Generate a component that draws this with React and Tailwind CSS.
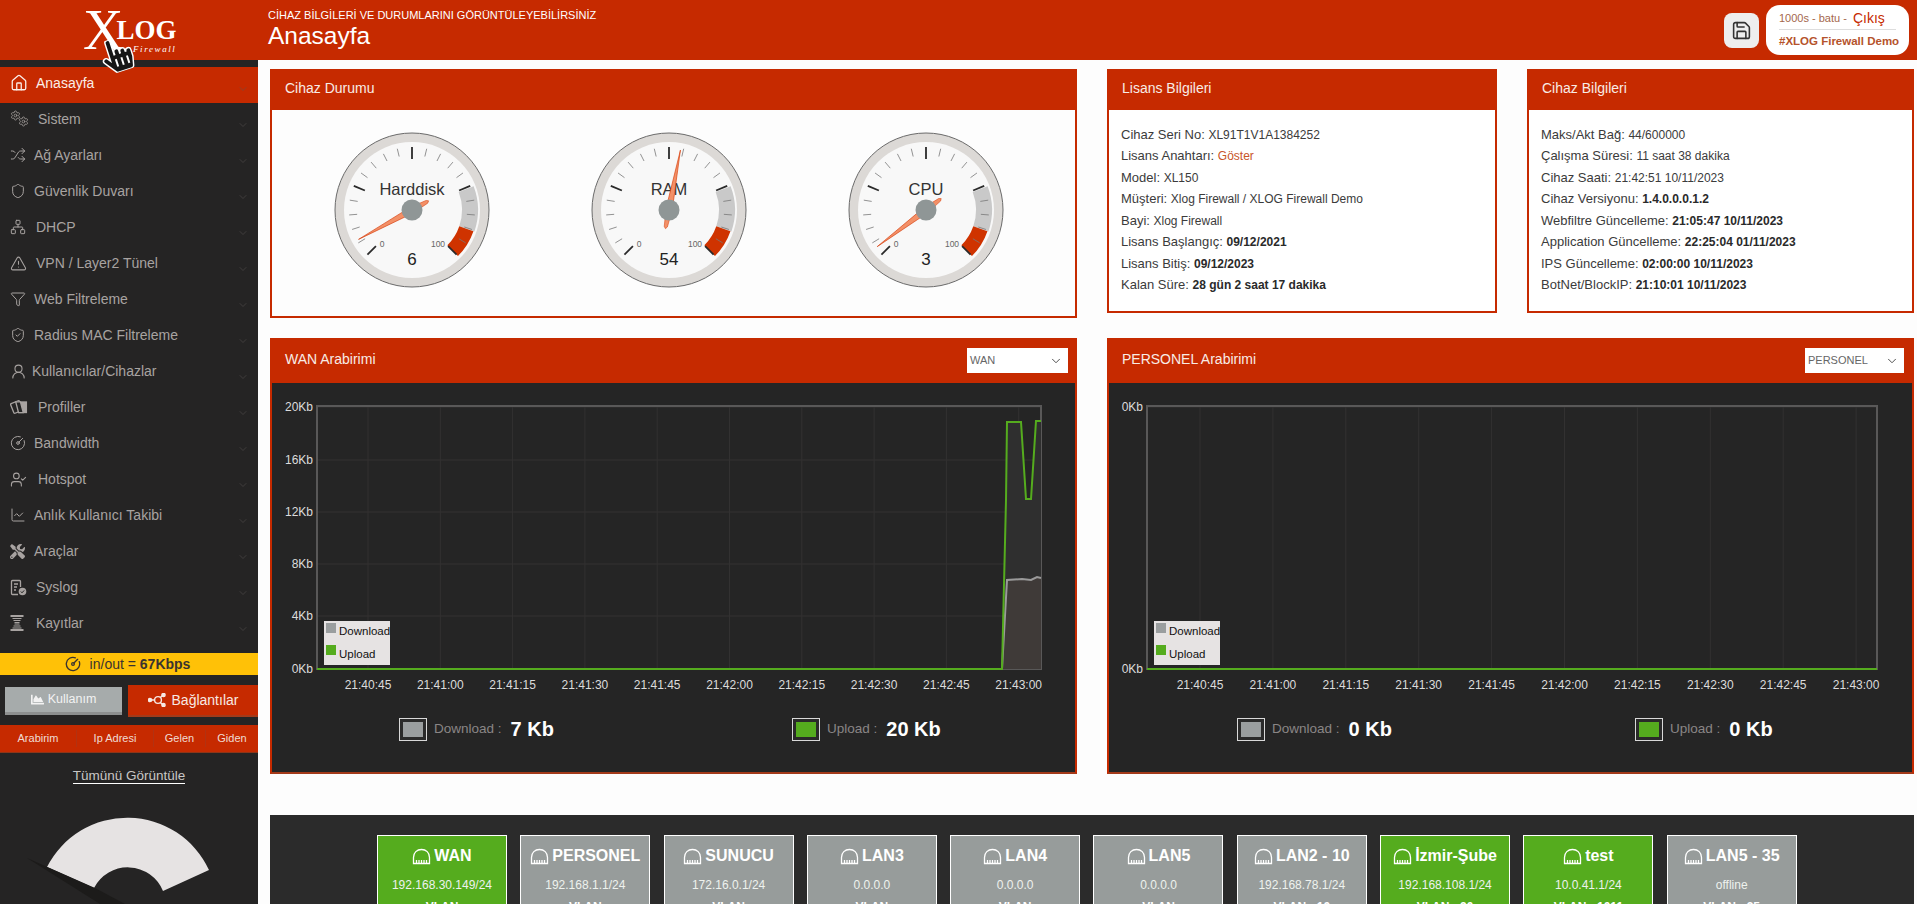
import React from "react";
import {
  House, Settings, Shuffle, Shield, Network, TriangleAlert, Funnel, ShieldCheck, UserRound,
  CircleGauge, UserCheck, ChartLine, ChevronDown, Save,
} from "lucide-react";
import { FaHandPointer, FaTools, FaChartArea } from "react-icons/fa";

function Gears() {
  return (
    <span className="relative block h-[18px] w-[18px]">
      <Settings size={11} strokeWidth={1.6} className="absolute left-0 top-0" />
      <Settings size={11} strokeWidth={1.6} className="absolute left-[8px] top-[6px]" />
    </span>
  );
}

function Cards() {
  return (
    <svg width="19" height="16" viewBox="0 0 19 16" fill="none" stroke="currentColor" strokeWidth="1.4">
      <rect x="2" y="2.5" width="10" height="11" rx="1" transform="rotate(-22 7 8)" />
      <path d="M9 2h9v12.5H9z" fill="currentColor" stroke="none" />
      <path d="M6 2.5l5 0 3 11.5H9z" fill="#242424" stroke="currentColor" />
    </svg>
  );
}

function LogDoc() {
  return (
    <svg width="17" height="17" viewBox="0 0 17 17" fill="none" stroke="currentColor" strokeWidth="1.3">
      <path d="M8 15.5H2.5A1 1 0 0 1 1.5 14.5V2.5A1 1 0 0 1 2.5 1.5H9.5A1 1 0 0 1 10.5 2.5V8" />
      <path d="M4 5H8M4 8H7M4 11H6" />
      <circle cx="12.5" cy="12.5" r="3.8" fill="currentColor" stroke="none" />
      <path d="M10.8 12.5L12 13.8L14.2 11.4" stroke="#242424" strokeWidth="1" />
    </svg>
  );
}

function Stack() {
  return (
    <svg width="14" height="16" viewBox="0 0 14 16" fill="none" stroke="currentColor" strokeWidth="1.2">
      <path d="M0.5 1H13.5M0.5 15H13.5" strokeWidth="1.8" />
      <path d="M2.5 3.5H11.5M3.5 5.5H10.5M4.5 7.5H9.5M4.5 9H9.5M3.5 11H10.5M2.5 13H11.5" />
    </svg>
  );
}

const menu = [
  { label: "Anasayfa", icon: <House size={18} strokeWidth={1.7} />, cls: "ml-[8px]", active: true },
  { label: "Sistem", icon: <Gears />, cls: "ml-[10px]" },
  { label: "Ağ Ayarları", icon: <Shuffle size={16} strokeWidth={1.5} />, cls: "ml-[6px]" },
  { label: "Güvenlik Duvarı", icon: <Shield size={16} strokeWidth={1.5} />, cls: "ml-[6px]" },
  { label: "DHCP", icon: <Network size={16} strokeWidth={1.5} />, cls: "ml-[8px]" },
  { label: "VPN / Layer2 Tünel", icon: <TriangleAlert size={17} strokeWidth={1.5} />, cls: "ml-[8px]" },
  { label: "Web Filtreleme", icon: <Funnel size={16} strokeWidth={1.5} />, cls: "ml-[6px]" },
  { label: "Radius MAC Filtreleme", icon: <ShieldCheck size={16} strokeWidth={1.5} />, cls: "ml-[6px]" },
  { label: "Kullanıcılar/Cihazlar", icon: <UserRound size={17} strokeWidth={1.5} />, cls: "ml-[4px]" },
  { label: "Profiller", icon: <Cards />, cls: "ml-[10px]" },
  { label: "Bandwidth", icon: <CircleGauge size={16} strokeWidth={1.5} />, cls: "ml-[6px]" },
  { label: "Hotspot", icon: <UserCheck size={17} strokeWidth={1.5} />, cls: "ml-[10px]" },
  { label: "Anlık Kullanıcı Takibi", icon: <ChartLine size={16} strokeWidth={1.5} />, cls: "ml-[6px]" },
  { label: "Araçlar", icon: <FaTools size={15} />, cls: "ml-[6px]" },
  { label: "Syslog", icon: <LogDoc />, cls: "ml-[8px]" },
  { label: "Kayıtlar", icon: <Stack />, cls: "ml-[8px]" },
];

function Sidebar() {
  return (
    <aside className="flex h-full w-[258px] shrink-0 flex-col overflow-hidden bg-[#252424] pt-[7px]">
      {menu.map((m) => (
        <div
          key={m.label}
          className={
            m.active
              ? "flex h-[36px] items-center bg-[#c62a00] pl-[10px] pr-[9px] text-[14px] text-[#fbeee8]"
              : "flex h-[36px] items-center pl-[10px] pr-[9px] text-[14px] text-[#a8a3a1]"
          }
        >
          <span className="flex h-[18px] w-[18px] shrink-0 items-center justify-start pb-[4px]">{m.icon}</span>
          <span className={"pb-[4px] " + m.cls}>{m.label}</span>
          <ChevronDown size={12} strokeWidth={1} className="ml-auto mt-[8px] text-[#5a5655]" />
        </div>
      ))}
      <div className="mt-[10px] flex h-[22px] items-center justify-center gap-[9px] bg-[#ffc107] pr-[3px] text-[14px] text-[#3a3330]">
        <CircleGauge size={16} strokeWidth={2} />
        <span>
          in/out = <b>67Kbps</b>
        </span>
      </div>
      <div className="mt-[10px] flex h-[32px] items-center pl-[5px]">
        <div className="flex h-[28px] w-[117px] items-center justify-center gap-[4px] border-b-[3px] border-[#8d8f8f] bg-[#a6abab] text-[12.5px] text-[#f2f2f2]">
          <FaChartArea size={13} />
          Kullanım
        </div>
        <div className="ml-[6px] flex h-[32px] w-[130px] items-center justify-center gap-[6px] border-b-[2px] border-[#a33a1a] bg-[#c62a00] text-[14px] text-[#f7e9e3]">
          <svg width="18" height="14" viewBox="0 0 18 14" fill="none" stroke="currentColor" strokeWidth="1.4">
            <circle cx="10" cy="7" r="3.4" />
            <path d="M1 7h5.5M12.4 4.5L15.5 1.5M12.4 9.5L15.5 12.5" />
            <circle cx="2" cy="7" r="1.6" fill="currentColor" />
            <circle cx="15.5" cy="2" r="1.6" fill="currentColor" />
            <circle cx="15.5" cy="12" r="1.6" fill="currentColor" />
          </svg>
          Bağlantılar
        </div>
      </div>
      <div className="mt-[8px] flex h-[28px] items-center border-b-[1px] border-[#8d3518] bg-[#c62a00] text-[11px] text-[#f0dcd4]">
        <div className="w-[76px] text-center">Arabirim</div>
        <div className="w-[77px] border-l border-[#b23212] text-center">Ip Adresi</div>
        <div className="w-[52px] border-l border-[#b23212] text-center">Gelen</div>
        <div className="w-[53px] border-l border-[#b23212] text-center">Giden</div>
      </div>
      <div className="mt-[14px] text-center text-[13.5px] leading-[18px] text-[#c9c7c6]">
        <span className="border-b border-white">Tümünü Görüntüle</span>
      </div>
      <svg className="mt-[15px] block shrink-0" width="258" height="104" viewBox="0 800 258 104">
        <path d="M47 867A90 90 0 0 1 209 870L163 891A38 38 0 0 0 94 888Z" fill="#e6e3e3" />
        <path d="M27 858L95 888L125 904H100Z" fill="#1c1b1a" />
      </svg>
    </aside>
  );
}

function polar(r, a) {
  const t = (a * Math.PI) / 180;
  return [r * Math.sin(t), -r * Math.cos(t)];
}

function arc(r1, r2, a1, a2) {
  const [x1, y1] = polar(r2, a1);
  const [x2, y2] = polar(r2, a2);
  const [x3, y3] = polar(r1, a2);
  const [x4, y4] = polar(r1, a1);
  return `M${x1} ${y1}A${r2} ${r2} 0 0 1 ${x2} ${y2}L${x3} ${y3}A${r1} ${r1} 0 0 0 ${x4} ${y4}Z`;
}

function Gauge({ label, value }) {
  const ticks = [];
  for (let i = 0; i <= 20; i++) {
    const a = -135 + i * 13.5;
    const major = i % 5 === 0;
    const [x1, y1] = polar(major ? 51 : 55, a);
    const [x2, y2] = polar(63, a);
    ticks.push(
      <line
        key={i}
        x1={x1}
        y1={y1}
        x2={x2}
        y2={y2}
        stroke={major ? "#2a2a2a" : "#777"}
        strokeWidth={major ? 1.8 : 0.8}
      />
    );
  }
  const angle = -135 + value * 2.7;
  return (
    <svg width="160" height="160" viewBox="-80 -80 160 160" className="shrink-0">
      <circle r="77" fill="#dcd9d6" stroke="#6b6b6b" strokeWidth="1" />
      <circle r="68" fill="#f8f8f8" />
      <path d={arc(50, 66, 69, 109)} fill="#c9c9c9" />
      <path d={arc(50, 65, 109, 135)} fill="#cf3300" />
      {ticks}
      <text y="-15" textAnchor="middle" fontSize="16.5" fill="#333" fontFamily="'Liberation Sans',sans-serif">
        {label}
      </text>
      <text y="55" textAnchor="middle" fontSize="17" fill="#222" fontFamily="'Liberation Sans',sans-serif">
        {value}
      </text>
      <text x="-30" y="37" textAnchor="middle" fontSize="8.5" fill="#666" fontFamily="'Liberation Sans',sans-serif">
        0
      </text>
      <text x="26" y="37" textAnchor="middle" fontSize="8.5" fill="#666" fontFamily="'Liberation Sans',sans-serif">
        100
      </text>
      <g transform={`rotate(${angle})`}>
        <path d="M0 -61L2.8 -8L-2.8 -8Z" fill="#f39067" stroke="#d63c0a" strokeWidth="0.6" />
        <path d="M-2.4 8L2.4 8L1.6 17L0 19L-1.6 17Z" fill="#f39067" stroke="#d63c0a" strokeWidth="0.5" />
      </g>
      <circle r="10.5" fill="#8f9696" />
    </svg>
  );
}

function Panel({ title, className, bodyClass, children }) {
  return (
    <section className={"flex flex-col border-2 border-[#c62a00] " + className}>
      <div className="flex h-[39px] shrink-0 items-center bg-[#c62a00] pb-[4px] pl-[13px] text-[14px] text-[#f8ece6]">
        {title}
      </div>
      <div className={"flex-1 " + bodyClass}>{children}</div>
    </section>
  );
}

function Row({ children }) {
  return <div className="h-[21.5px] text-[13px] leading-[21.5px] text-[#3b3b3b]">{children}</div>;
}

function V({ children }) {
  return <span className="text-[12px]">{children}</span>;
}

function B({ children }) {
  return <b className="text-[12px] text-[#2a2a2a]">{children}</b>;
}

const times = [
  "21:40:45", "21:41:00", "21:41:15", "21:41:30", "21:41:45",
  "21:42:00", "21:42:15", "21:42:30", "21:42:45", "21:43:00",
];

function Chart({ box, left, right, timeStart, timeStep, yLabels, data }) {
  const top = 406;
  const bottom = 669;
  return (
    <svg width="803" height="320" viewBox={`${box} 383 803 320`} className="block" fontFamily="'Liberation Sans',sans-serif">
      {yLabels.map((l) => (
        <g key={l.t}>
          <line x1={left} x2={right} y1={l.y} y2={l.y} stroke="#343333" strokeWidth="1" />
          <text x={left - 4} y={l.y + 4} textAnchor="end" fontSize="12" fill="#dcdcdc">
            {l.t}
          </text>
        </g>
      ))}
      {times.map((t, i) => {
        const x = timeStart + i * timeStep;
        return (
          <g key={t}>
            <line x1={x} x2={x} y1={top} y2={bottom} stroke="#323131" strokeWidth="1" />
            <text x={x} y={689} textAnchor="middle" fontSize="12" fill="#dcdcdc">
              {t}
            </text>
          </g>
        );
      })}
      <rect x={left} y={top} width={right - left} height={bottom - top} fill="none" stroke="#595858" strokeWidth="2" />
      {data}
      <rect x={left + 7} y="621" width="66" height="44" fill="#e6e3e3" />
      <rect x={left + 9} y="623" width="10" height="10" fill="#9a9e9f" />
      <rect x={left + 9} y="645" width="10" height="10" fill="#55ac1e" />
      <text x={left + 22} y="635" fontSize="11.5" fill="#111">
        Download
      </text>
      <text x={left + 22} y="658" fontSize="11.5" fill="#111">
        Upload
      </text>
    </svg>
  );
}

function Stat({ color, label, value, className }) {
  return (
    <div className={"flex items-center " + className}>
      <span className="h-[21px] w-[26px] shrink-0 border-[3px] border-[#2a2a2a] outline outline-1 outline-[#d9d9d9]" style={{ backgroundColor: color }} />
      <span className="ml-[8px] text-[13.5px] text-[#8a8685]">{label} :</span>
      <b className="ml-[9px] text-[20px] text-white">{value}</b>
    </div>
  );
}

function Select({ label, className }) {
  return (
    <div className={"flex h-[25px] items-center justify-between bg-white pl-[3px] pr-[5px] text-[11px] text-[#666] " + className}>
      {label}
      <ChevronDown size={14} strokeWidth={1.6} className="text-[#444]" />
    </div>
  );
}

function Port() {
  return (
    <svg width="19" height="17" viewBox="0 0 19 17" fill="none" stroke="currentColor" strokeWidth="1.3" className="shrink-0">
      <path d="M1.5 15.5V9.5C1.5 4.5 5 1.5 9.5 1.5S17.5 4.5 17.5 9.5V15.5Z" />
      <path d="M4.5 15V12M7 15V12M9.5 15V12M12 15V12M14.5 15V12" />
    </svg>
  );
}

const cards = [
  { t: "WAN", ip: "192.168.30.149/24", v: "VLAN", on: true },
  { t: "PERSONEL", ip: "192.168.1.1/24", v: "VLAN" },
  { t: "SUNUCU", ip: "172.16.0.1/24", v: "VLAN" },
  { t: "LAN3", ip: "0.0.0.0", v: "VLAN" },
  { t: "LAN4", ip: "0.0.0.0", v: "VLAN" },
  { t: "LAN5", ip: "0.0.0.0", v: "VLAN" },
  { t: "LAN2 - 10", ip: "192.168.78.1/24", v: "VLAN - 10" },
  { t: "İzmir-Şube", ip: "192.168.108.1/24", v: "VLAN - 20", on: true },
  { t: "test", ip: "10.0.41.1/24", v: "VLAN - 1011", on: true },
  { t: "LAN5 - 35", ip: "offline", v: "VLAN - 35" },
];

export default function App() {
  return (
    <div className="relative flex h-[904px] w-[1917px] flex-col overflow-hidden bg-[#fdfdfd] font-['Liberation_Sans',Arial,sans-serif]">
      <header className="flex h-[60px] shrink-0 items-center bg-[#c62a00] text-white">
        <div className="flex w-[258px] shrink-0 items-start pl-[83px]">
          <span className="font-['Liberation_Serif',serif] text-[56px] leading-[56px]">X</span>
          <div className="ml-[-7px] mt-[12px] flex flex-col">
            <span className="font-['Liberation_Serif',serif] text-[27px] font-bold leading-[32px]">LOG</span>
            <span className="mt-[-2px] self-end font-['Liberation_Serif',serif] text-[9px] italic leading-[10px] tracking-[1.6px]">Firewall</span>
          </div>
        </div>
        <div className="mb-[2px] ml-[10px] flex flex-col">
          <span className="text-[11px] leading-[14px]">CİHAZ BİLGİLERİ VE DURUMLARINI GÖRÜNTÜLEYEBİLİRSİNİZ</span>
          <span className="text-[24.5px] leading-[28px]">Anasayfa</span>
        </div>
        <div className="ml-auto flex items-center pr-[8px]">
          <div className="flex h-[35px] w-[35px] items-center justify-center rounded-[8px] bg-[#eeeeee] text-[#333]">
            <Save size={21} strokeWidth={1.8} />
          </div>
          <div className="ml-[7px] flex h-[50px] w-[143px] flex-col rounded-[14px] bg-white px-[13px] pt-[3px]">
            <div className="flex h-[22px] items-center border-b border-[#dddddd] text-[11px] text-[#a4674c]">
              1000s - batu -<span className="ml-[6px] text-[14px] text-[#c62a00]">Çıkış</span>
            </div>
            <div className="mt-[3px] whitespace-nowrap text-[11.5px] font-bold leading-[16px] text-[#b5532c]">#XLOG Firewall Demo</div>
          </div>
        </div>
      </header>
      <div className="flex min-h-0 flex-1">
        <Sidebar />
        <main className="min-w-0 flex-1 pl-[12px] pr-[3px] pt-[9px]">
          <div className="flex items-start">
            <Panel title="Cihaz Durumu" className="h-[249px] w-[807px]" bodyClass="flex gap-[97px] bg-[#fdfdfd] pl-[60px] pt-[20px]">
              <Gauge label="Harddisk" value={6} />
              <Gauge label="RAM" value={54} />
              <Gauge label="CPU" value={3} />
            </Panel>
            <Panel title="Lisans Bilgileri" className="ml-[30px] h-[244px] w-[390px]" bodyClass="bg-white pl-[12px] pt-[13.5px]">
              <Row>Cihaz Seri No: <V>XL91T1V1A1384252</V></Row>
              <Row>Lisans Anahtarı: <span className="text-[12px] text-[#c8552a]">Göster</span></Row>
              <Row>Model: <V>XL150</V></Row>
              <Row>Müşteri: <V>Xlog Firewall / XLOG Firewall Demo</V></Row>
              <Row>Bayi: <V>Xlog Firewall</V></Row>
              <Row>Lisans Başlangıç: <B>09/12/2021</B></Row>
              <Row>Lisans Bitiş: <B>09/12/2023</B></Row>
              <Row>Kalan Süre: <B>28 gün 2 saat 17 dakika</B></Row>
            </Panel>
            <Panel title="Cihaz Bilgileri" className="ml-[30px] h-[244px] w-[387px]" bodyClass="bg-white pl-[12px] pt-[13.5px]">
              <Row>Maks/Akt Bağ: <V>44/600000</V></Row>
              <Row>Çalışma Süresi: <V>11 saat 38 dakika</V></Row>
              <Row>Cihaz Saati: <V>21:42:51 10/11/2023</V></Row>
              <Row>Cihaz Versiyonu: <B>1.4.0.0.0.1.2</B></Row>
              <Row>Webfiltre Güncelleme: <B>21:05:47 10/11/2023</B></Row>
              <Row>Application Güncelleme: <B>22:25:04 01/11/2023</B></Row>
              <Row>IPS Güncelleme: <B>02:00:00 10/11/2023</B></Row>
              <Row>BotNet/BlockIP: <B>21:10:01 10/11/2023</B></Row>
            </Panel>
          </div>
          <div className="mt-[20px] flex items-start">
            <section className="flex h-[436px] w-[807px] flex-col border-2 border-t-0 border-[#c62a00] border-b-[#a33a1a] bg-[#252525]">
              <div className="flex h-[45px] shrink-0 items-center justify-between bg-[#c62a00] pl-[13px] pr-[7px] text-[14px] text-[#f8ece6]">
                <span className="pb-[3px]">WAN Arabirimi</span>
                <Select label="WAN" className="w-[101px]" />
              </div>
              <Chart
                box={272}
                left={317}
                right={1041}
                timeStart={368}
                timeStep={72.3}
                yLabels={[
                  { t: "20Kb", y: 407 },
                  { t: "16Kb", y: 460 },
                  { t: "12Kb", y: 512 },
                  { t: "8Kb", y: 564 },
                  { t: "4Kb", y: 616 },
                  { t: "0Kb", y: 669 },
                ]}
                data={
                  <g fill="none" strokeWidth="2">
                    <path d="M1002 669L1007 422L1021 422L1026 499L1031 499L1036 421L1041 421V669Z" fill="#2f2f2f" stroke="none" />
                    <path d="M1002 669L1007 580L1022 579L1031 580L1037 577L1041 578V669Z" fill="#3f3a38" stroke="none" />
                    <path d="M1002 669L1007 580L1022 579L1031 580L1037 577L1041 578" stroke="#9a9a9a" />
                    <path d="M317 669H1002L1006 500L1007 422L1021 422L1026 499L1031 499L1036 421L1041 421" stroke="#55ac1e" />
                  </g>
                }
              />
              <div className="mt-[11px] flex">
                <Stat color="#9a9e9f" label="Download" value="7 Kb" className="ml-[128px] w-[393px]" />
                <Stat color="#55ac1e" label="Upload" value="20 Kb" />
              </div>
            </section>
            <section className="ml-[30px] flex h-[436px] w-[807px] flex-col border-2 border-t-0 border-[#c62a00] border-b-[#a33a1a] bg-[#252525]">
              <div className="flex h-[45px] shrink-0 items-center justify-between bg-[#c62a00] pl-[13px] pr-[8px] text-[14px] text-[#f8ece6]">
                <span className="pb-[3px]">PERSONEL Arabirimi</span>
                <Select label="PERSONEL" className="w-[99px]" />
              </div>
              <Chart
                box={1109}
                left={1147}
                right={1877}
                timeStart={1200}
                timeStep={72.9}
                yLabels={[
                  { t: "0Kb", y: 407 },
                  { t: "0Kb ", y: 669 },
                ]}
                data={<path d="M1147 669H1877" fill="none" stroke="#55ac1e" strokeWidth="2" />}
              />
              <div className="mt-[11px] flex">
                <Stat color="#9a9e9f" label="Download" value="0 Kb" className="ml-[129px] w-[398px]" />
                <Stat color="#55ac1e" label="Upload" value="0 Kb" />
              </div>
            </section>
          </div>
          <section className="mt-[41px] flex h-[130px] w-[1644px] gap-[13.3px] bg-[#2b2b2b] pl-[107px] pt-[20px]">
            {cards.map((c) => (
              <div
                key={c.t}
                className={
                  c.on
                    ? "flex h-[110px] w-[130px] shrink-0 flex-col items-center border border-white bg-[#55ac1e] pt-[9px] text-white"
                    : "flex h-[110px] w-[130px] shrink-0 flex-col items-center border border-white bg-[#979c9b] pt-[9px] text-white"
                }
              >
                <div className="flex h-[22px] items-center gap-[3px] whitespace-nowrap text-[16px] font-bold">
                  <Port />
                  {c.t}
                </div>
                <div className="mt-[8px] text-[12px] leading-[20px] text-[#eef2ee]">{c.ip}</div>
                <div className="mt-[2px] text-[12px] font-bold leading-[20px]">{c.v}</div>
              </div>
            ))}
          </section>
        </main>
      </div>
      <FaHandPointer
        size={34}
        className="absolute left-[100px] top-[38px] -rotate-[18deg] text-[#161616]"
        stroke="#ffffff"
        strokeWidth={22}
      />
    </div>
  );
}
